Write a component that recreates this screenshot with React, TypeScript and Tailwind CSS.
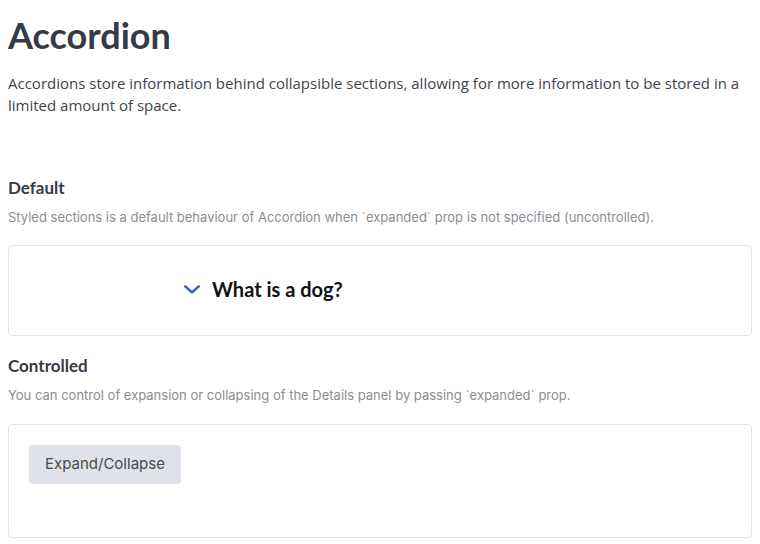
export default function App() {
  return (
    <div className="min-h-screen bg-white px-2 pt-[14px] font-['Lato',sans-serif]">
      <h1 className="text-[36px] font-bold leading-[42px] text-[#363a46]">Accordion</h1>
      <p className="mt-[16px] font-['Open_Sans',sans-serif] text-[15px] leading-[22px] text-[#3f434d]">
        Accordions store information behind collapsible sections, allowing for more information to be stored in a
        limited amount of space.
      </p>

      <h2 className="mt-[61px] text-[17px] font-bold leading-[22px] text-[#363a46]">Default</h2>
      <p className="mt-[9px] font-['Inter',sans-serif] text-[13px] leading-[18px] text-[#8a8d94]">
        Styled sections is a default behaviour of Accordion when `expanded` prop is not specified (uncontrolled).
      </p>
      <div className="mt-[19px] flex h-[91px] items-center rounded border border-[#e3e3e3] pb-1 pl-[174px]">
        <svg width="18" height="18" viewBox="0 0 24 24" fill="none" stroke="#2a5bd7" strokeWidth="3.2" strokeLinecap="round" strokeLinejoin="round">
          <path d="M3 8.5l9 8 9-8" />
        </svg>
        <span className="ml-[11px] text-[20px] font-bold text-[#111]">What is a dog?</span>
      </div>

      <h2 className="mt-[19px] text-[17px] font-bold leading-[22px] text-[#363a46]">Controlled</h2>
      <p className="mt-[9px] font-['Inter',sans-serif] text-[13px] leading-[18px] text-[#8a8d94]">
        You can control of expansion or collapsing of the Details panel by passing `expanded` prop.
      </p>
      <div className="mt-[20px] h-[114px] rounded border border-[#e3e3e3] px-5 pt-5">
        <button className="h-[39px] rounded bg-[#dfe2e8] px-4 font-['Inter',sans-serif] text-[15px] text-[#4a4a4a]">
          Expand/Collapse
        </button>
      </div>
    </div>
  );
}
